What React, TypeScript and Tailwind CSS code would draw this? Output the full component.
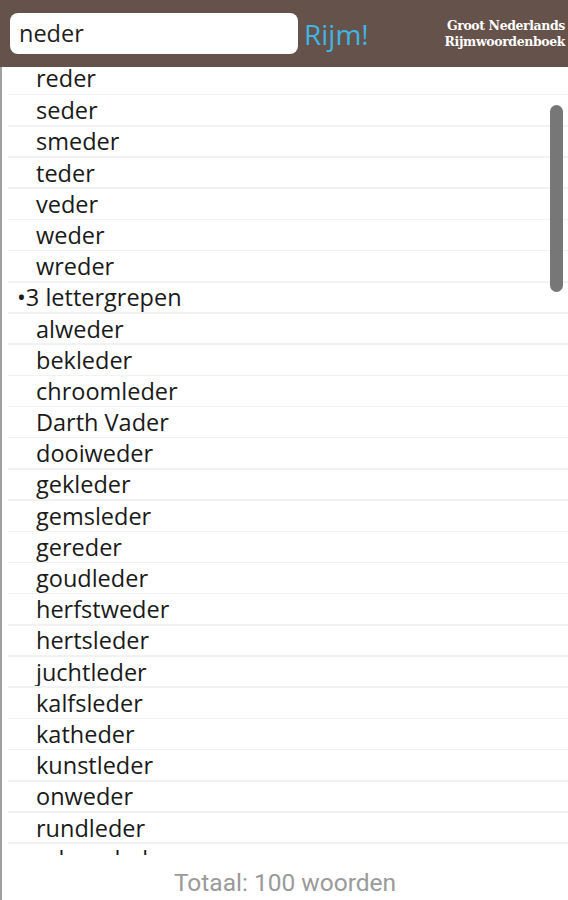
import React from 'react';

const words: { text: string; heading?: boolean }[] = [
  { text: 'reder' },
  { text: 'seder' },
  { text: 'smeder' },
  { text: 'teder' },
  { text: 'veder' },
  { text: 'weder' },
  { text: 'wreder' },
  { text: '•3 lettergrepen', heading: true },
  { text: 'alweder' },
  { text: 'bekleder' },
  { text: 'chroomleder' },
  { text: 'Darth Vader' },
  { text: 'dooiweder' },
  { text: 'gekleder' },
  { text: 'gemsleder' },
  { text: 'gereder' },
  { text: 'goudleder' },
  { text: 'herfstweder' },
  { text: 'hertsleder' },
  { text: 'juchtleder' },
  { text: 'kalfsleder' },
  { text: 'katheder' },
  { text: 'kunstleder' },
  { text: 'onweder' },
  { text: 'rundleder' },
  { text: 'schoenleder' },
];

export default function App() {
  return (
    <div className="w-[568px] h-[900px] flex flex-col bg-white overflow-hidden font-['Open_Sans',sans-serif]">
      {/* header */}
      <div className="h-[67px] shrink-0 bg-[#65524a] flex items-center pl-[10px] pr-[3px]">
        <div className="w-[288px] h-[41px] bg-white rounded-[8px] flex items-center pl-[9px] text-[23.5px] text-[#1e1e1e]">
          neder
        </div>
        <div className="ml-[6px] text-[28px] text-[#3fb5e3] leading-none">Rijm!</div>
        <div className="ml-auto text-right text-white font-['DejaVu_Serif',serif] font-bold text-[12.5px] leading-[16px] tracking-[-0.4px]">
          <div>Groot Nederlands</div>
          <div>Rijmwoordenboek</div>
        </div>
      </div>

      {/* list, scrolled a few px so the first row sits under the header */}
      <div className="relative flex-1 overflow-hidden border-l-2 border-[#a0a0a0]">
        {words.map((w, i) => (
          <div key={w.text} className={i === 0 ? 'h-[28.4px] flex flex-col' : 'h-[31.2px] flex flex-col'}>
            <div
              className={
                i === 0
                  ? 'flex-1 leading-[23px] pl-[34px] text-[23.5px] text-[#1a1a1a]'
                  : w.heading
                  ? 'flex-1 flex items-center leading-[28px] pl-[15px] text-[23.5px] text-[#1a1a1a]'
                  : 'flex-1 flex items-center leading-[28px] pl-[34px] text-[23.5px] text-[#1a1a1a]'
              }
            >
              {w.text}
            </div>
            <div className="h-[1.5px] ml-[6px] bg-[#f2f2f2]" />
          </div>
        ))}
        <div className="absolute left-[548px] top-[38px] w-[13px] h-[187px] rounded-full bg-[#777777]" />
      </div>

      {/* footer */}
      <div className="h-[45px] shrink-0 flex items-center justify-center pt-[11px] font-['Roboto',sans-serif] text-[24.5px] text-[#9a9a9a] border-l-2 border-[#a0a0a0]">
        Totaal: 100 woorden
      </div>
    </div>
  );
}
